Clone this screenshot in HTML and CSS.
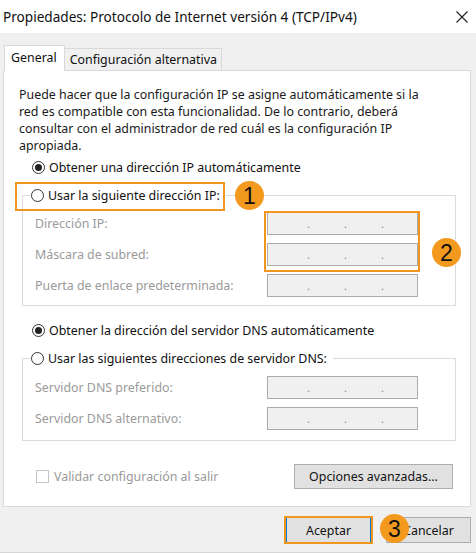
FILE: index.html
```html
<!DOCTYPE html>
<html lang="es">
<head>
<meta charset="utf-8">
<title>Propiedades</title>
<link rel="stylesheet" href="styles.css">
</head>
<body>
<div class="window">
  <div class="titlebar">
    <span class="title">Propiedades: Protocolo de Internet versión 4 (TCP/IPv4)</span>
    <svg class="close" width="12" height="12" viewBox="0 0 12 12"><path d="M0.5 0.5 L11.5 11.5 M11.5 0.5 L0.5 11.5" stroke="#222" stroke-width="1.1" fill="none"/></svg>
  </div>
  <div class="body">
    <div class="tabs">
      <div class="tab active">General</div>
      <div class="tab">Configuración alternativa</div>
    </div>
    <div class="panel">
      <p class="intro">Puede hacer que la configuración IP se asigne automáticamente si la<br>red es compatible con esta funcionalidad. De lo contrario, deberá<br>consultar con el administrador de red cuál es la configuración IP<br>apropiada.</p>
      <div class="option first"><span class="radio checked"></span>Obtener una dirección IP automáticamente</div>
      <fieldset class="group">
        <legend class="option legend"><span class="radio"></span>Usar la siguiente dirección IP:</legend>
        <div class="field"><span class="label">Dirección IP:</span><span class="ip"><span>.</span><span>.</span><span>.</span></span></div>
        <div class="field"><span class="label">Máscara de subred:</span><span class="ip"><span>.</span><span>.</span><span>.</span></span></div>
        <div class="field"><span class="label">Puerta de enlace predeterminada:</span><span class="ip"><span>.</span><span>.</span><span>.</span></span></div>
      </fieldset>
      <div class="option dns"><span class="radio checked"></span>Obtener la dirección del servidor DNS automáticamente</div>
      <fieldset class="group dnsgroup">
        <legend class="option legend"><span class="radio"></span>Usar las siguientes direcciones de servidor DNS:</legend>
        <div class="field"><span class="label">Servidor DNS preferido:</span><span class="ip"><span>.</span><span>.</span><span>.</span></span></div>
        <div class="field"><span class="label">Servidor DNS alternativo:</span><span class="ip"><span>.</span><span>.</span><span>.</span></span></div>
      </fieldset>
      <div class="bottom-row">
        <span class="check"><span class="box"></span>Validar configuración al salir</span>
        <span class="btn adv">Opciones avanzadas...</span>
      </div>
    </div>
    <div class="footer">
      <span class="btn ok">Aceptar</span>
      <span class="btn">Cancelar</span>
    </div>
  </div>
  <div class="mark mark1"></div>
  <div class="mark mark2"></div>
  <div class="mark mark3"></div>
  <div class="badge badge1">1</div>
  <div class="badge badge2">2</div>
  <div class="badge badge3">3</div>
</div>
</body>
</html>
```
FILE: styles.css
```css
html, body { margin: 0; padding: 0; background: #fff; }
.window {
  position: relative;
  width: 476px;
  height: 553px;
  box-sizing: border-box;
  background: #f0f0f0;
  border-bottom: 1px solid #d6d6d6;
  font-family: "Noto Sans", sans-serif;
  font-size: 12.4px;
  color: #000;
  overflow: hidden;
}
.titlebar {
  height: 33px;
  background: #fff;
  display: flex;
  align-items: center;
  justify-content: space-between;
  padding: 0 8px 0 3px;
  box-sizing: border-box;
}
.title { font-size: 13.6px; color: #111; }
.close { display: block; }
.body { padding: 12px 5px 0 3px; }
.tabs {
  display: flex;
  align-items: flex-end;
  height: 26px;
  margin: 0 0 -1px 1px;
  position: relative;
  z-index: 1;
}
.tab {
  height: 22px;
  box-sizing: border-box;
  border: 1px solid #d9d9d9;
  border-bottom: none;
  border-left: none;
  padding: 0 4px 0 5px;
  display: flex;
  align-items: center;
  background: #f0f0f0;
  margin-bottom: 1px;
  color: #111;
}
.tab.active {
  height: 26px;
  border-left: 1px solid #d9d9d9;
  background: #fff;
  padding: 0 7px 2px 6px;
  margin-bottom: 0;
}
.panel {
  background: #fff;
  border: 1px solid #d9d9d9;
  height: 437px;
  box-sizing: border-box;
  padding: 15px 14px 0 15px;
}
.intro { margin: 0; line-height: 17px; color: #1a1a1a; }
.option {
  display: flex;
  align-items: center;
  height: 20px;
  gap: 4px;
  color: #111;
}
.option.first { margin: 3px 0 0 13px; }
.option.dns { margin: 14px 0 0 13px; }
.radio {
  width: 13px;
  height: 13px;
  box-sizing: border-box;
  border: 1px solid #333;
  border-radius: 50%;
  background: #fff;
  display: flex;
  align-items: center;
  justify-content: center;
  flex: none;
}
.radio.checked::after {
  content: "";
  width: 7px;
  height: 7px;
  border-radius: 50%;
  background: #222;
}
.group {
  margin: 8px 0 0 3px;
  padding: 0 37px 8px 12px;
  border: 1px solid #dcdcdc;
  min-width: 0;
}
.dnsgroup { padding-bottom: 10px; }
.legend { margin-left: -4px; padding: 0 6px 0 0; }
.field {
  display: flex;
  justify-content: space-between;
  align-items: center;
  height: 23px;
  margin-top: 8px;
}
.legend + .field { margin-top: 7px; }
.dnsgroup .legend + .field { margin-top: 8px; }
.label { color: #9a9a9a; }
.ip {
  width: 151px;
  height: 23px;
  box-sizing: border-box;
  border: 1px solid #ababab;
  background: #f0f0f0;
  display: flex;
  padding-left: 5px;
  color: #8a8a8a;
  font-size: 11px;
  line-height: 21px;
}
.ip span { width: 37px; text-align: right; }
.bottom-row {
  display: flex;
  justify-content: space-between;
  align-items: center;
  margin: 23px 3px 0 17px;
  height: 25px;
}
.check { display: flex; align-items: center; gap: 5px; color: #9a9a9a; }
.box {
  width: 13px;
  height: 13px;
  box-sizing: border-box;
  border: 1px solid #c4c4c4;
  background: #fff;
}
.btn {
  display: flex;
  align-items: center;
  justify-content: center;
  height: 25px;
  box-sizing: border-box;
  border: 1px solid #adadad;
  background: #e1e1e1;
  color: #111;
}
.adv { width: 159px; }
.footer {
  display: flex;
  justify-content: flex-end;
  gap: 15px;
  padding-top: 10px;
}
.footer .btn { width: 85px; height: 26px; }
.ok { border-color: #0078d7; }
.mark {
  position: absolute;
  border: 2px solid #f0961e;
  box-sizing: border-box;
}
.mark1 { left: 15px; top: 182px; width: 210px; height: 29px; }
.mark2 { left: 264px; top: 211px; width: 156px; height: 61px; }
.mark3 { left: 284px; top: 516px; width: 89px; height: 28px; }
.badge {
  position: absolute;
  width: 29px;
  height: 29px;
  border-radius: 50%;
  background: #f39a1e;
  color: #111;
  font-family: "Liberation Sans", sans-serif;
  font-size: 23px;
  line-height: 30px;
  text-align: center;
}
.badge1 { left: 235px; top: 181px; }
.badge2 { left: 432px; top: 238px; }
.badge3 { left: 380px; top: 514px; }
```
